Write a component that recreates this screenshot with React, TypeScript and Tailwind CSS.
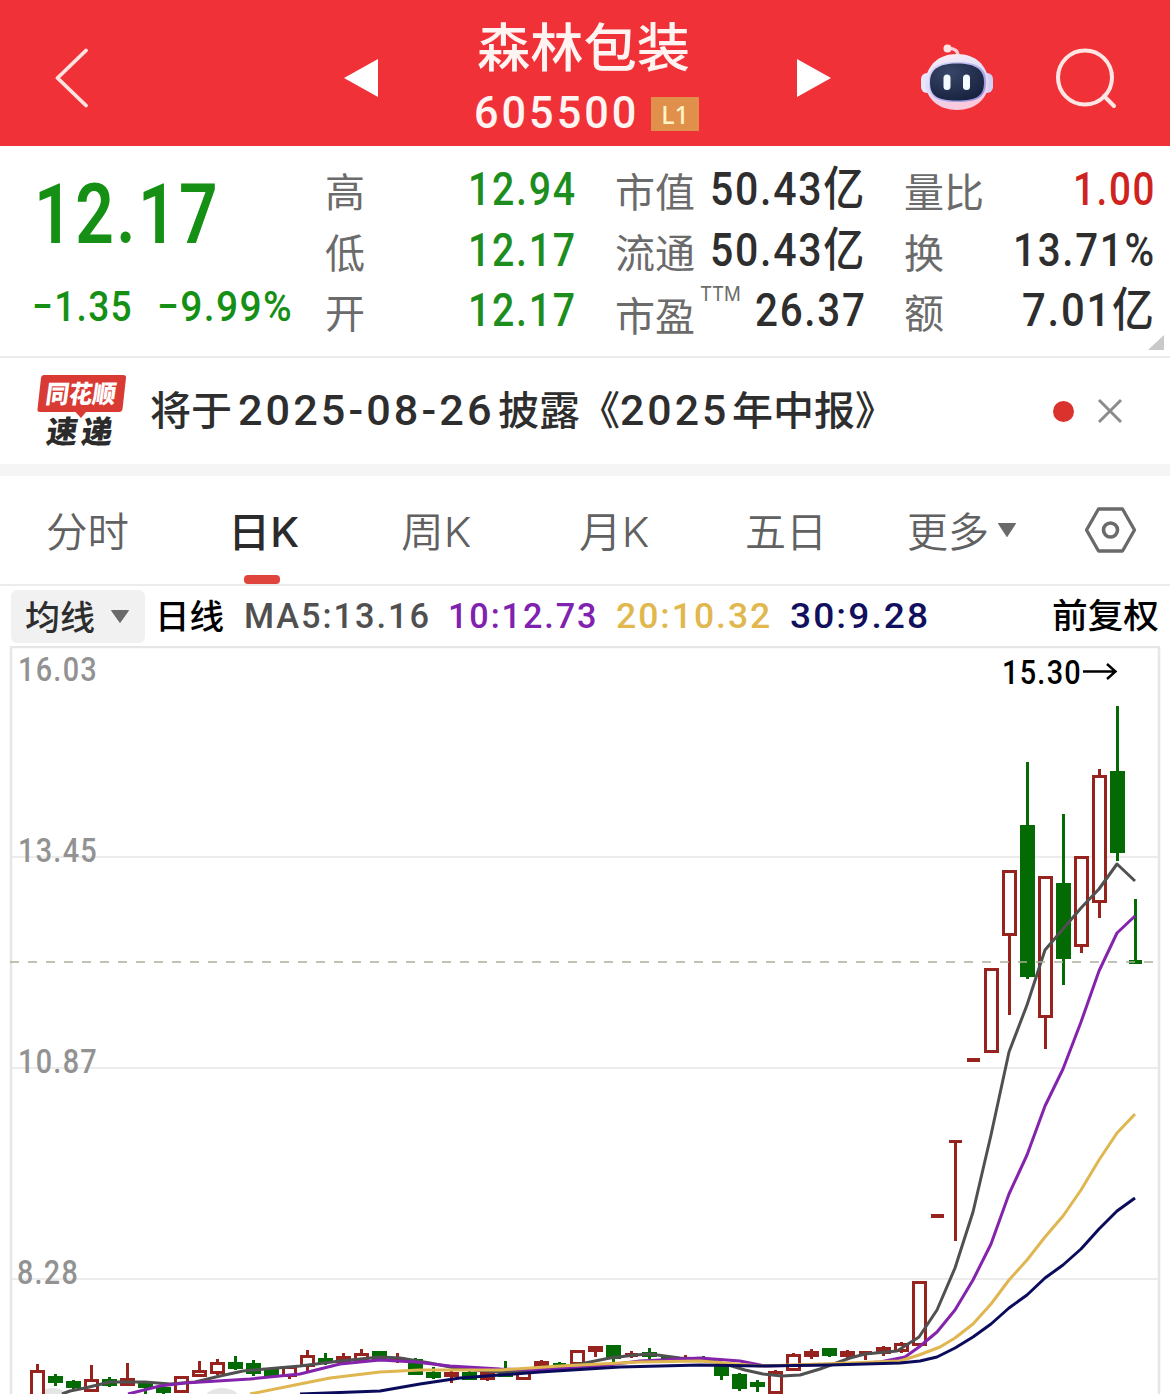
import { useLayoutEffect, useRef, useState } from 'react';
import type { ReactNode } from 'react';

/** Text run that is condensed or widened horizontally to occupy a set width. */
function Fit({ w, className = '', children }: { w: number; className?: string; children: ReactNode }) {
  const ref = useRef<HTMLSpanElement>(null);
  const [scale, setScale] = useState(1);
  useLayoutEffect(() => {
    if (ref.current) setScale(w / ref.current.offsetWidth);
  }, [w]);
  return (
    <span className={`block shrink-0 whitespace-nowrap ${className}`} style={{ width: w }}>
      <span ref={ref} className="inline-block origin-left" style={{ transform: `scaleX(${scale})` }}>
        {children}
      </span>
    </span>
  );
}

const DIN = "font-['Roboto','Noto_Sans_CJK_SC',sans-serif]";

type Candle = [kind: 'g' | 'r' | 'h', high: number, top: number, bottom: number, low: number];

// Screen-space candles, oldest first, 18px apart. g = filled green, r = filled red, h = hollow red.
const candles: Candle[] = [
  ['h', 1364, 1370, 1398, 1398], ['g', 1374, 1376, 1383, 1386], ['g', 1380, 1381, 1388, 1390],
  ['h', 1365, 1379, 1392, 1392], ['g', 1377, 1379, 1386, 1387], ['r', 1363, 1378, 1386, 1386],
  ['g', 1381, 1383, 1388, 1394], ['g', 1386, 1387, 1393, 1394], ['h', 1376, 1376, 1393, 1393],
  ['h', 1361, 1370, 1377, 1377], ['h', 1359, 1362, 1374, 1375], ['g', 1356, 1362, 1369, 1370],
  ['g', 1360, 1363, 1374, 1376], ['g', 1369, 1369, 1376, 1376], ['h', 1366, 1366, 1377, 1379],
  ['h', 1350, 1355, 1367, 1371], ['g', 1353, 1358, 1363, 1365], ['r', 1353, 1356, 1363, 1363],
  ['h', 1349, 1353, 1362, 1363], ['g', 1351, 1351, 1361, 1361], ['r', 1353, 1357, 1362, 1363],
  ['g', 1358, 1359, 1375, 1375], ['g', 1367, 1372, 1378, 1379], ['r', 1371, 1372, 1377, 1383],
  ['g', 1371, 1372, 1380, 1380], ['h', 1371, 1372, 1380, 1381], ['g', 1361, 1372, 1377, 1377],
  ['h', 1367, 1370, 1380, 1380], ['h', 1360, 1361, 1367, 1367], ['g', 1362, 1363, 1366, 1366],
  ['h', 1350, 1350, 1365, 1365], ['r', 1346, 1346, 1352, 1357], ['g', 1345, 1345, 1359, 1362],
  ['r', 1351, 1353, 1357, 1358], ['g', 1348, 1352, 1357, 1359], ['g', 1356, 1357, 1360, 1360],
  ['r', 1355, 1358, 1362, 1362], ['g', 1356, 1358, 1362, 1362], ['g', 1364, 1365, 1376, 1380],
  ['g', 1373, 1374, 1389, 1391], ['g', 1380, 1382, 1387, 1392], ['h', 1370, 1371, 1394, 1394],
  ['h', 1353, 1354, 1371, 1371], ['r', 1349, 1351, 1357, 1359], ['g', 1348, 1348, 1356, 1357],
  ['r', 1350, 1351, 1357, 1358], ['r', 1351, 1351, 1355, 1360], ['r', 1346, 1347, 1354, 1356],
  ['h', 1342, 1343, 1352, 1353], ['h', 1281, 1281, 1346, 1347], ['r', 1214, 1214, 1218, 1218],
  ['r', 1140, 1140, 1143, 1241], ['r', 1058, 1058, 1062, 1062], ['h', 968, 968, 1053, 1053],
  ['h', 870, 870, 936, 1015], ['g', 762, 825, 977, 979], ['h', 876, 876, 1018, 1049],
  ['g', 814, 883, 959, 985], ['h', 856, 856, 947, 953], ['h', 769, 775, 903, 918],
  ['g', 706, 771, 853, 861], ['g', 899, 960, 964, 964],
];

const ma5 = '62,1394 70,1391 85,1388 110,1382 145,1382 170,1384 195,1382 220,1376 243,1371 300,1366 340,1361 380,1357 400,1358 430,1363 460,1369 500,1372 525,1371 545,1369 580,1364 610,1358 635,1355 650,1354 680,1358 705,1359 725,1364 745,1370 763,1374 782,1376 800,1375 820,1369 850,1358 865,1354 897,1351 919,1337 937,1310 955,1268 973,1212 991,1135 1009,1052 1027,1005 1045,950 1063,929 1081,908 1099,889 1117,864 1135,881';
const ma10 = '128,1394 160,1386 185,1383 250,1379 300,1374 320,1369 340,1364 380,1360 415,1362 450,1366 500,1369 545,1370 600,1366 640,1361 700,1358 740,1361 765,1366 850,1364 880,1362 905,1357 919,1347 937,1332 955,1310 973,1280 991,1244 1009,1194 1027,1155 1045,1106 1063,1069 1081,1022 1099,971 1117,933 1135,916';
const ma20 = '250,1394 290,1386 330,1378 380,1372 420,1370 500,1370 560,1366 640,1362 700,1361 760,1366 850,1363 900,1361 919,1355 940,1347 955,1338 973,1324 991,1304 1009,1280 1027,1260 1045,1237 1063,1216 1081,1190 1099,1160 1117,1133 1135,1114';
const ma30 = '300,1394 380,1391 420,1384 460,1378 540,1372 620,1367 700,1365 760,1366 830,1365 900,1363 920,1361 937,1357 955,1348 973,1337 991,1324 1009,1308 1027,1295 1045,1278 1063,1265 1081,1249 1099,1229 1117,1211 1135,1198';

function CandleShape({ c, x }: { c: Candle; x: number }) {
  const [kind, high, top, bottom, low] = c;
  const color = kind === 'g' ? '#046a04' : '#96231e';
  const half = bottom - top <= 4 ? 6.5 : 7.5;
  return (
    <g fill={color}>
      {high < top && <rect x={x - 1.5} y={high} width={3} height={top - high} />}
      {low > bottom && <rect x={x - 1.5} y={bottom} width={3} height={low - bottom} />}
      {kind === 'h' ? (
        <rect x={x - 6} y={top + 1.5} width={12} height={bottom - top - 3} fill="#fff" stroke={color} strokeWidth={3} />
      ) : (
        <rect x={x - half} y={top} width={half * 2} height={bottom - top} />
      )}
    </g>
  );
}

function KLineChart() {
  const axis = [
    { t: '16.03', x: 18, w: 80, y: 681 },
    { t: '13.45', x: 18, w: 80, y: 862 },
    { t: '10.87', x: 18, w: 80, y: 1073 },
    { t: '8.28', x: 17, w: 62, y: 1284 },
  ];
  return (
    <svg className="block h-[748px] w-[1170px]" viewBox="0 646 1170 748">
      <g stroke="#e6e6e6" strokeWidth={2} fill="none">
        <path d="M11 857H1159M11 1068H1159M11 1279H1159" stroke="#ececec" />
        <path d="M11 1394V647H1159V1394" strokeWidth={2.5} />
      </g>
      <ellipse cx={53} cy={1400} rx={17} ry={12} fill="#e3e6e3" />
      <ellipse cx={222} cy={1400} rx={18} ry={12} fill="#e3e6e3" />
      {axis.map((a) => (
        <text key={a.t} x={a.x} y={a.y} textLength={a.w} letterSpacing={1.5} lengthAdjust="spacingAndGlyphs" fontFamily="Roboto" fontWeight={500} fontSize={34} fill="#929292">
          {a.t}
        </text>
      ))}
      {candles.map((c, i) => (
        <CandleShape key={i} c={c} x={37.5 + i * 18} />
      ))}
      <g fill="none" strokeWidth={3} strokeLinejoin="round">
        <polyline points={ma5} stroke="#505050" />
        <polyline points={ma10} stroke="#8423ac" />
        <polyline points={ma20} stroke="#dfb650" />
        <polyline points={ma30} stroke="#0b0b5c" />
      </g>
      <path d="M10 962H1154" stroke="#a9b09c" strokeWidth={1.6} strokeDasharray="9 9" />
      <text x={1002} y={684} textLength={80} letterSpacing={1.5} lengthAdjust="spacingAndGlyphs" fontFamily="Roboto" fontWeight={500} fontSize={34} fill="#000">
        15.30
      </text>
      <path d="M1083 671.5H1115M1107 664L1115.500 671.500L1107 679" fill="none" stroke="#000" strokeWidth={2.4} />
    </svg>
  );
}

function Robot() {
  return (
    <svg className="block h-[68px] w-[74px]" viewBox="0 0 74 68">
      <defs>
        <linearGradient id="shell" x1="0" y1="0" x2="0.3" y2="1">
          <stop offset="0" stopColor="#ffeff4" />
          <stop offset="0.55" stopColor="#dcdcfb" />
          <stop offset="1" stopColor="#fbc9dc" />
        </linearGradient>
        <linearGradient id="rim" x1="0" y1="0" x2="1" y2="1">
          <stop offset="0" stopColor="#d9dbf8" />
          <stop offset="1" stopColor="#8d85dc" />
        </linearGradient>
        <radialGradient id="face" cx="0.35" cy="0.25" r="0.8">
          <stop offset="0" stopColor="#3a4668" />
          <stop offset="1" stopColor="#17223f" />
        </radialGradient>
      </defs>
      <path d="M27 5.500C34 5 38 7 38 13" fill="none" stroke="#fccfd6" strokeWidth="3.200" />
      <circle cx="27.500" cy="5.500" r="4" fill="#fde3e6" />
      <rect x="1" y="30" width="12" height="20" rx="6" fill="#e9e6fb" />
      <rect x="61" y="30" width="12" height="20" rx="6" fill="#d3d0f8" />
      <path d="M37 11C55 11 67 22 68.500 38C69 56 55 67 37 67S5 56 5.500 38C7 22 19 11 37 11Z" fill="url(#shell)" />
      <path d="M37 19C57 19 66 25 66 38C66 53 60 59 37 59S9 53 9 38C9 25 17 19 37 19Z" fill="url(#rim)" />
      <path d="M37 20.500C56 20.500 64 27 64 39C64 53 57 57.500 37 57.500S10 53 10 39C10 27 18 20.500 37 20.500Z" fill="url(#face)" />
      <rect x="23.500" y="31.500" width="7" height="15.500" rx="3.500" fill="#f4fbff" />
      <rect x="43" y="31.500" width="7" height="15.500" rx="3.500" fill="#f4fbff" />
    </svg>
  );
}

function NewsLogo() {
  return (
    <svg className="-mb-3 block h-[88px] w-[92px]" viewBox="0 0 92 88">
      <path d="M8 2H87Q90.500 2 90 5L86.500 36Q86 39 83 39H50L45 45L39.500 39H4Q1 39 1.500 36L5 5Q5.500 2 8 2Z" fill="#d93a34" />
      <g transform="skewX(-8)" fontFamily="'Noto Sans CJK SC', sans-serif" fontWeight={900}>
        <text x={13} y={30} fontSize={25} textLength={70} lengthAdjust="spacingAndGlyphs" fill="#fff">同花顺</text>
        <text x={19} y={70} fontSize={31} textLength={66} fill="#2b2b2b">速递</text>
      </g>
    </svg>
  );
}

function Down({ className }: { className: string }) {
  return (
    <svg className={className} viewBox="0 0 20 13" preserveAspectRatio="none">
      <path d="M1.500 0.500H18.500L10 12.500Z" fill="#6a6a6a" stroke="#6a6a6a" strokeLinejoin="round" />
    </svg>
  );
}

const label = 'text-[40px] text-[#6b6b6b]';
const value = `${DIN} font-medium text-[46.5px] tracking-[2px]`;
const digits = `${DIN} text-[42px] tracking-[3px]`;
const average = `${DIN} text-[35.5px] tracking-[2px]`;

export default function App() {
  return (
    <main className="h-[1394px] w-[1170px] overflow-hidden bg-white font-['Inter','Noto_Sans_CJK_SC',sans-serif] leading-none text-[#2e2e2e]">
      <header className="flex h-[146px] items-start bg-[#f03238] text-[#fff4f2]">
        <svg className="mt-12 ml-[54px] h-[60px] w-9" viewBox="0 0 36 60">
          <path d="M32 2.500L3.500 30L32 57.500" fill="none" stroke="#ffe3e0" strokeWidth="3.800" strokeLinecap="round" strokeLinejoin="round" />
        </svg>
        <svg className="mt-[58px] ml-[253px] h-10 w-9" viewBox="0 0 36 40">
          <path d="M35 1V39L1 20Z" fill="#fff" />
        </svg>
        <div className="ml-[95px] flex w-[226px] flex-col pt-[21px]">
          <Fit w={213} className="ml-[3px] text-[52px]/[56px] font-medium">森林包装</Fit>
          <div className="mt-[17px] flex items-center">
            <Fit w={165} className={`${DIN} text-[43.5px]/[40px] font-medium tracking-[3px]`}>605500</Fit>
            <span className="ml-3 flex h-[34px] w-12 items-center justify-center bg-[#e0904a] font-['Noto_Sans'] text-[25px] font-medium text-[#fff3c4]">L1</span>
          </div>
        </div>
        <svg className="mt-[58px] ml-24 h-10 w-9" viewBox="0 0 36 40">
          <path d="M1 1V39L35 20Z" fill="#fff" />
        </svg>
        <div className="mt-[43px] ml-[88px]"><Robot /></div>
        <svg className="mt-12 ml-[62px] h-[62px] w-[62px]" viewBox="0 0 62 62">
          <ellipse cx="29" cy="29.500" rx="27" ry="27" fill="none" stroke="#ffe6e4" strokeWidth="4" />
          <path d="M48 48L58 58" stroke="#ffe6e4" strokeWidth="4" strokeLinecap="round" />
        </svg>
      </header>

      <section className="relative flex h-[212px] border-b-2 border-[#ececec]">
        <div className={`${DIN} w-[325px] pt-[25px] font-medium text-[#159015]`}>
          <Fit w={186} className="ml-[34px] text-[83px]/[88px] font-semibold tracking-[3px]">12.17</Fit>
          <div className="mt-[25px] flex pl-8 text-[43px]/[44px] tracking-[1.5px]">
            <Fit w={101}>−1.35</Fit>
            <Fit w={136} className="ml-6">−9.99%</Fit>
          </div>
        </div>
        <div className="w-[290px] pt-[13px]">
          {[['高', '12.94'], ['低', '12.17'], ['开', '12.17']].map(([k, v]) => (
            <div key={k} className="flex h-[60.500px] items-center leading-[60px]">
              <span className={`${label} pt-2`}>{k}</span>
              <Fit w={109} className={`${value} ml-[103px] text-[#1d8e1d]`}>{v}</Fit>
            </div>
          ))}
        </div>
        <div className="w-[289px] pt-[13px]">
          {[['市值', '50.43亿'], ['流通', '50.43亿']].map(([k, v]) => (
            <div key={k} className="flex h-[60.500px] items-center leading-[60px]">
              <span className={`${label} pt-2`}>{k}</span>
              <Fit w={156} className={`${value} ml-[15px]`}>{v}</Fit>
            </div>
          ))}
          <div className="flex h-[60.500px] items-center leading-[60px]">
            <span className={`${label} pt-3.5`}>市盈</span>
            <Fit w={41} className="ml-[5px] self-start text-[20px]/[28px] text-[#6b6b6b]">TTM</Fit>
            <Fit w={112} className={`${value} ml-[14px]`}>26.37</Fit>
          </div>
        </div>
        <div className="w-[252px] pt-[13px]">
          {([['量比', '1.00', 83, 'text-[#cf2320]'], ['换', '13.71%', 143, ''], ['额', '7.01亿', 134, '']] as const).map(([k, v, w, c]) => (
            <div key={k} className="flex h-[60.500px] items-center justify-between leading-[60px]">
              <span className={`${label} pt-2`}>{k}</span>
              <Fit w={w} className={`${value} ${c}`}>{v}</Fit>
            </div>
          ))}
        </div>
        <svg className="absolute right-1.5 bottom-1.5 h-[15px] w-4" viewBox="0 0 16 15">
          <path d="M16 0V15H0Z" fill="#c9c9c9" />
        </svg>
      </section>

      <section className="flex h-[106px] items-center text-[40px]/[60px] font-medium">
        <div className="ml-9"><NewsLogo /></div>
        <Fit w={82} className="ml-[22px]">将于</Fit>
        <Fit w={257} className={`${digits} ml-[6px]`}>2025-08-26</Fit>
        <Fit w={82} className="ml-[3px]">披露</Fit>
        <Fit w={40}>《</Fit>
        <Fit w={109} className={digits}>2025</Fit>
        <Fit w={123} className="ml-[3px]">年中报</Fit>
        <Fit w={40}>》</Fit>
        <span className="ml-[158px] size-[21px] rounded-full bg-[#dc322e]" />
        <svg className="ml-[23px] size-[26px]" viewBox="0 0 26 26">
          <path d="M2 2L24 24M24 2L2 24" stroke="#8b8b8b" strokeWidth="3" />
        </svg>
      </section>
      <div className="h-3 bg-[#f5f5f5]" />

      <nav className="flex h-[110px] items-center border-b-2 border-[#ececec] text-[41px]/[60px] font-[350] text-[#616161]">
        <Fit w={83} className="ml-[46px] pt-[3px]">分时</Fit>
        <div className="relative ml-[99px] pt-[3px] font-medium text-[#2b2b2b]">
          <Fit w={71}>日K</Fit>
          <span className="absolute -bottom-[22px] left-4 h-[9px] w-9 rounded-[4px] bg-[#e0453d]" />
        </div>
        <Fit w={71} className="ml-[102px] pt-[3px]">周K</Fit>
        <Fit w={71} className="ml-[107px] pt-[3px]">月K</Fit>
        <Fit w={82} className="ml-[95px] pt-[3px]">五日</Fit>
        <Fit w={82} className="ml-[80px] pt-[3px]">更多</Fit>
        <Down className="ml-2 h-[14px] w-5" />
        <svg className="ml-[67px] h-[48px] w-[53px]" viewBox="0 0 53 48">
          <path d="M14.500 3H38.500L50.500 24L38.500 45H14.500L2.500 24Z" fill="none" stroke="#6a6a6a" strokeWidth="3.300" strokeLinejoin="round" />
          <circle cx="26.500" cy="24" r="7" fill="none" stroke="#6a6a6a" strokeWidth="3.600" />
        </svg>
      </nav>

      <section className="flex h-[60px] items-center text-[34px]/[50px] font-medium">
        <div className="ml-[11px] flex h-[53px] w-[134px] items-center rounded-md bg-[#f1f1f1] pl-[14px]">
          <Fit w={70} className="pt-1">均线</Fit>
          <Down className="ml-[15px] h-[13px] w-5" />
        </div>
        <Fit w={69} className="ml-[10px] pt-0.5 text-black">日线</Fit>
        <Fit w={187} className={`${average} ml-5 text-[#505050]`}>MA5:13.16</Fit>
        <Fit w={150} className={`${average} ml-[17px] text-[#7f22b0]`}>10:12.73</Fit>
        <Fit w={156} className={`${average} ml-[18px] text-[#e0b84e]`}>20:10.32</Fit>
        <Fit w={140} className={`${average} ml-[18px] text-[#10105e]`}>30:9.28</Fit>
        <Fit w={107} className="ml-[122px] text-black">前复权</Fit>
      </section>

      <KLineChart />
    </main>
  );
}
